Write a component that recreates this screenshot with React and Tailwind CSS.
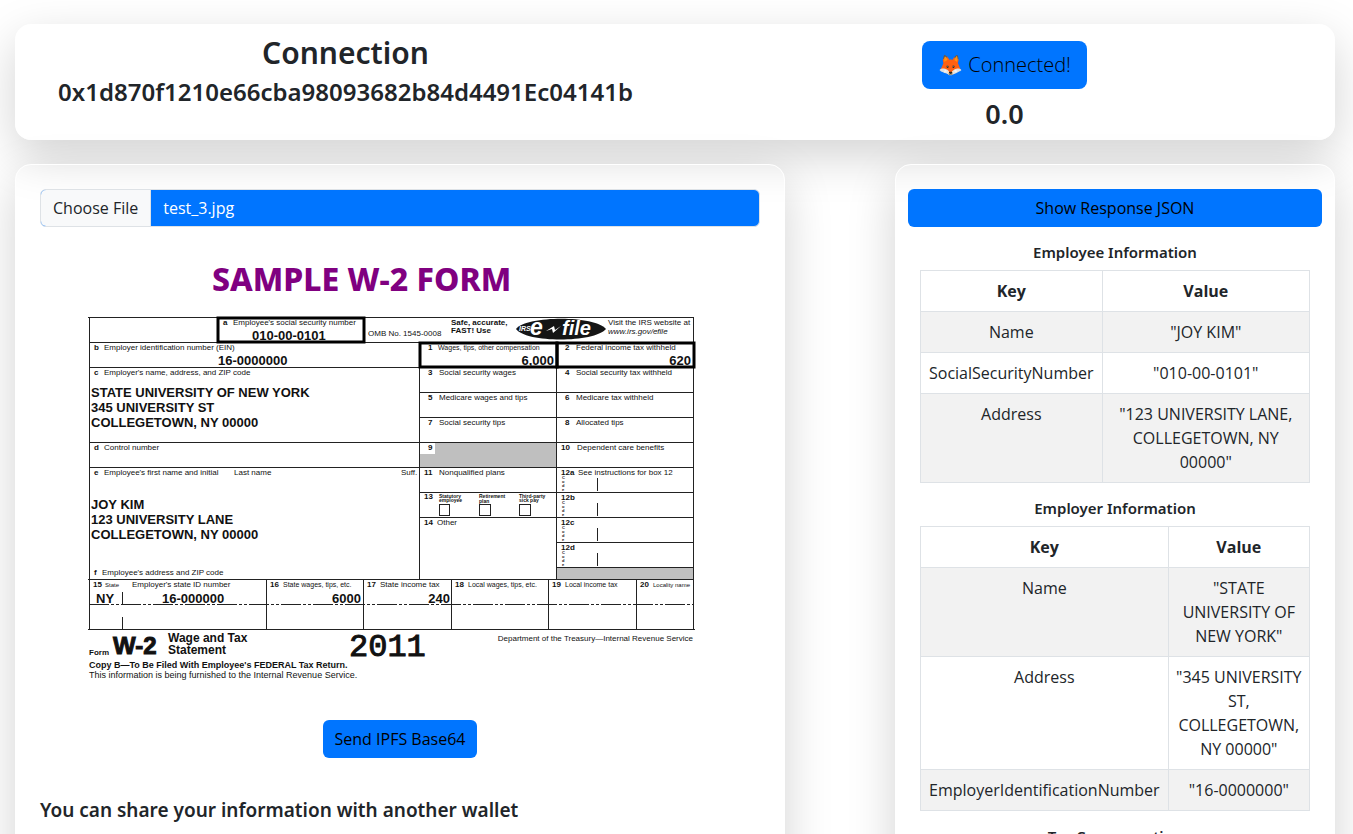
import React from "react";

const EMPLOYEE = [
  ["Name", '"JOY KIM"'],
  ["SocialSecurityNumber", '"010-00-0101"'],
  ["Address", '"123 UNIVERSITY LANE, COLLEGETOWN, NY 00000"'],
];

const EMPLOYER = [
  ["Name", '"STATE UNIVERSITY OF NEW YORK"'],
  ["Address", '"345 UNIVERSITY ST, COLLEGETOWN, NY 00000"'],
  ["EmployerIdentificationNumber", '"16-0000000"'],
];

// Box captions: [x, y, box number or letter, caption x, caption, caption size]
const CAPTIONS = [
  [223, 325, "a", 233, "Employee's social security number"],
  [94, 350, "b", 104, "Employer identification number (EIN)"],
  [94, 375, "c", 104, "Employer's name, address, and ZIP code"],
  [94, 450, "d", 104, "Control number"],
  [94, 475, "e", 104, "Employee's first name and initial"],
  [94, 575, "f", 102, "Employee's address and ZIP code"],
  [428, 350, "1", 438, "Wages, tips, other compensation", 7],
  [565, 350, "2", 576, "Federal income tax withheld"],
  [428, 375, "3", 439, "Social security wages"],
  [565, 375, "4", 576, "Social security tax withheld"],
  [428, 400, "5", 439, "Medicare wages and tips"],
  [565, 400, "6", 576, "Medicare tax withheld"],
  [428, 425, "7", 439, "Social security tips"],
  [565, 425, "8", 576, "Allocated tips"],
  [428, 450, "9", 439, ""],
  [561, 450, "10", 577, "Dependent care benefits"],
  [424, 475, "11", 439, "Nonqualified plans"],
  [561, 475, "12a", 578, "See instructions for box 12"],
  [424, 499, "13", 439, ""],
  [561, 500, "12b", 578, ""],
  [424, 525, "14", 437, "Other"],
  [561, 525, "12c", 578, ""],
  [561, 550, "12d", 578, ""],
  [93, 587, "15", 132, "Employer's state ID number"],
  [270, 587, "16", 283, "State wages, tips, etc.", 7],
  [367, 587, "17", 380, "State income tax"],
  [455, 587, "18", 468, "Local wages, tips, etc.", 7],
  [552, 587, "19", 565, "Local income tax", 7],
];

const ENTRIES = [
  [252, 340, "010-00-0101", "start"],
  [218, 365, "16-0000000", "start"],
  [554, 365, "6,000", "end"],
  [691, 365, "620", "end"],
  [91, 397, "STATE UNIVERSITY OF NEW YORK", "start"],
  [91, 412, "345 UNIVERSITY ST", "start"],
  [91, 427, "COLLEGETOWN, NY 00000", "start"],
  [91, 509, "JOY KIM", "start"],
  [91, 524, "123 UNIVERSITY LANE", "start"],
  [91, 539, "COLLEGETOWN, NY 00000", "start"],
  [96, 603, "NY", "start"],
  [162, 603, "16-000000", "start"],
  [361, 603, "6000", "end"],
  [450, 603, "240", "end"],
];

const GRID_LINES =
  "M88 317.5H694M89.5 317V630M693.5 317V630M89 342.5H694M89 367.5H694M420 392.5H694M420 417.5H694" +
  "M89 442.5H694M89 467.5H694M420 492.5H694M420 517.5H694M557 542.5H694M557 567.5H694M88 579.5H694" +
  "M88 629.5H695M419.5 342V579M556.5 342V579M266.5 579V630M363.5 579V630M451.5 579V630M548.5 579V630M636.5 579V630" +
  "M122.5 592V604M122.5 617V629M597.5 478V491M597.5 503V516M597.5 528V541M597.5 553V566";

function W2Form() {
  return (
    <svg
      viewBox="40 243 720 461"
      className="block h-auto w-full"
      role="img"
      aria-label="Sample W-2 form"
      fontFamily='"Liberation Sans", Arial, sans-serif'
      fill="#111"
    >
      <text x="212" y="291" fontFamily='"Noto Sans", sans-serif' fontSize="32" fontWeight="800" fill="#800080">
        SAMPLE W-2 FORM
      </text>

      <rect x="420" y="443" width="137" height="24" fill="#bfbfbf" />
      <rect x="420" y="443" width="15" height="11" fill="#fff" />
      <rect x="557" y="568" width="137" height="11" fill="#bfbfbf" />
      <path d={GRID_LINES} stroke="#222" strokeWidth="1" fill="none" />
      <path d="M89 604.5H694" stroke="#222" strokeWidth="1" strokeDasharray="20 2 3 2 3 2" fill="none" />
      <g fill="none" stroke="#000" strokeWidth="3">
        <rect x="218" y="318" width="146" height="24" />
        <rect x="420" y="343" width="137" height="24" />
        <rect x="557" y="343" width="137" height="24" />
      </g>
      <g fill="#fff" stroke="#222">
        <rect x="439.5" y="504.5" width="10" height="11" />
        <rect x="479.5" y="504.5" width="11" height="11" />
        <rect x="519.5" y="504.5" width="11" height="11" />
      </g>

      <g fontSize="8">
        {CAPTIONS.map(([x, y, mark, cx, caption, size]) => (
          <React.Fragment key={mark}>
            <text x={x} y={y} fontWeight="700">{mark}</text>
            {caption && <text x={cx} y={y} fontSize={size ?? 8}>{caption}</text>}
          </React.Fragment>
        ))}
        <text x="234" y="475">Last name</text>
        <text x="401" y="475">Suff.</text>
        <text x="368" y="336">OMB No. 1545-0008</text>
        <text x="451" y="325" fontWeight="700">Safe, accurate,</text>
        <text x="451" y="333" fontWeight="700">FAST! Use</text>
        <text x="608" y="325">Visit the IRS website at</text>
        <text x="608" y="334" fontStyle="italic">www.irs.gov/efile</text>
        <text x="640" y="587" fontWeight="700">20</text>
        <text x="693" y="641" textAnchor="end">Department of the Treasury—Internal Revenue Service</text>
      </g>
      <g fontSize="6">
        <text x="105" y="587">State</text>
        <text x="653" y="587">Locality name</text>
        <g fontWeight="700" fontSize="5">
          <text x="439" y="498">Statutory</text>
          <text x="439" y="502">employee</text>
          <text x="479" y="498">Retirement</text>
          <text x="479" y="503">plan</text>
          <text x="519" y="498">Third-party</text>
          <text x="519" y="502">sick pay</text>
        </g>
        {[479, 504, 529, 554].map((y) => (
          <g key={y} fontSize="4" fontWeight="700">
            <text x="562" y={y}>C</text>
            <text x="562" y={y + 4}>o</text>
            <text x="562" y={y + 8}>d</text>
            <text x="562" y={y + 12}>e</text>
          </g>
        ))}
      </g>

      <g fontSize="13" fontWeight="700">
        {ENTRIES.map(([x, y, value, anchor]) => (
          <text key={`${x}-${y}`} x={x} y={y} textAnchor={anchor}>{value}</text>
        ))}
      </g>

      <path d="M516 329C526 316 594 315 606 329C594 343 526 343 516 329Z" fill="#151515" />
      <g fill="#fff" fontWeight="700" fontStyle="italic">
        <text x="519" y="331" fontSize="7">IRS</text>
        <text x="530" y="335" fontSize="23">e</text>
        <text x="562" y="335" fontSize="20">file</text>
      </g>
      <path d="M546 331L554 326L555 330L561 326L553 333L552 329Z" fill="#fff" />

      <text x="89" y="655" fontSize="8" fontWeight="700">Form</text>
      <text x="113" y="654" fontSize="24" fontWeight="700" stroke="#111" strokeWidth="1">W-2</text>
      <g fontSize="12" fontWeight="700">
        <text x="168" y="642">Wage and Tax</text>
        <text x="168" y="654">Statement</text>
      </g>
      <text x="349" y="656" fontSize="32" fontFamily='"Liberation Mono", monospace' stroke="#111" strokeWidth="1">2011</text>
      <text x="89" y="668" fontSize="9" fontWeight="700">
        Copy B—To Be Filed With Employee's FEDERAL Tax Return.
      </text>
      <text x="89" y="678" fontSize="9">
        This information is being furnished to the Internal Revenue Service.
      </text>
    </svg>
  );
}

function Card({ className, children }) {
  return (
    <section
      className={`rounded-2xl border border-white shadow-[0_16px_48px_rgba(0,0,0,0.175)] ${className}`}
    >
      {children}
    </section>
  );
}

function InfoTable({ title, rows }) {
  return (
    <div className="mx-3 mt-4">
      <h6 className="mb-2 text-center font-['Noto_Sans',sans-serif] text-[15px] leading-[19px] font-semibold">{title}</h6>
      <table className="w-full border-collapse text-center">
        <thead>
          <tr>
            <th className="border border-[#dee2e6] p-2 font-bold">Key</th>
            <th className="border border-[#dee2e6] px-1.5 py-2 font-bold">Value</th>
          </tr>
        </thead>
        <tbody>
          {rows.map(([key, value]) => (
            <tr key={key} className="align-top odd:bg-black/5">
              <td className="border border-[#dee2e6] p-2">{key}</td>
              <td className="border border-[#dee2e6] px-1.5 py-2">{value}</td>
            </tr>
          ))}
        </tbody>
      </table>
    </div>
  );
}

export default function App() {
  return (
    <div className="h-screen overflow-x-hidden overflow-y-auto bg-white pr-[3px] font-['Open_Sans','Noto_Sans',sans-serif] text-base text-[#212529] [scrollbar-width:none]">
      <main className="mx-auto max-w-[1320px] py-6">
        <Card className="grid grid-cols-2 py-2 text-center font-['Noto_Sans',sans-serif] font-semibold">
          <div>
            <h2 className="text-[30px] leading-10">Connection</h2>
            <h4 className="mt-1 text-2xl leading-[30px]">0x1d870f1210e66cba98093682b84d4491Ec04141b</h4>
          </div>
          <div className="flex flex-col items-center pt-2">
            <button
              type="button"
              className="h-12 rounded-lg bg-[#0075ff] px-4 font-['Open_Sans',sans-serif] text-xl font-light text-black"
            >
              🦊 Connected!
            </button>
            <h3 className="mt-2 text-[27px] leading-[34px]">0.0</h3>
          </div>
        </Card>

        <div className="mt-6 grid min-h-screen grid-cols-12">
          <Card className="col-span-7 p-6">
            <label className="flex h-[38px] cursor-pointer overflow-hidden rounded-md border border-[#dee2e6] bg-[#0075ff] leading-9">
              <input type="file" className="sr-only" aria-label="Choose File" />
              <span className="border-r border-[#dee2e6] bg-[#f8f9fa] px-3">Choose File</span>
              <span className="px-3 text-white">test_3.jpg</span>
            </label>
            <div className="py-4">
              <W2Form />
            </div>
            <div className="text-center">
              <button type="button" className="h-[38px] rounded-md bg-[#0075ff] px-3 text-black">
                Send IPFS Base64
              </button>
            </div>
            <h5 className="mt-10 font-['Noto_Sans',sans-serif] text-[19px] leading-6 font-semibold">
              You can share your information with another wallet
            </h5>
          </Card>

          <Card className="col-span-4 col-start-9 px-3 py-6">
            <button type="button" className="h-[38px] w-full rounded-md bg-[#0075ff] text-black">
              Show Response JSON
            </button>
            <InfoTable title="Employee Information" rows={EMPLOYEE} />
            <InfoTable title="Employer Information" rows={EMPLOYER} />
            <h6 className="mt-4 text-center font-['Noto_Sans',sans-serif] text-[15px] leading-[19px] font-semibold">
              Tax Compensation
            </h6>
          </Card>
        </div>
      </main>
    </div>
  );
}
